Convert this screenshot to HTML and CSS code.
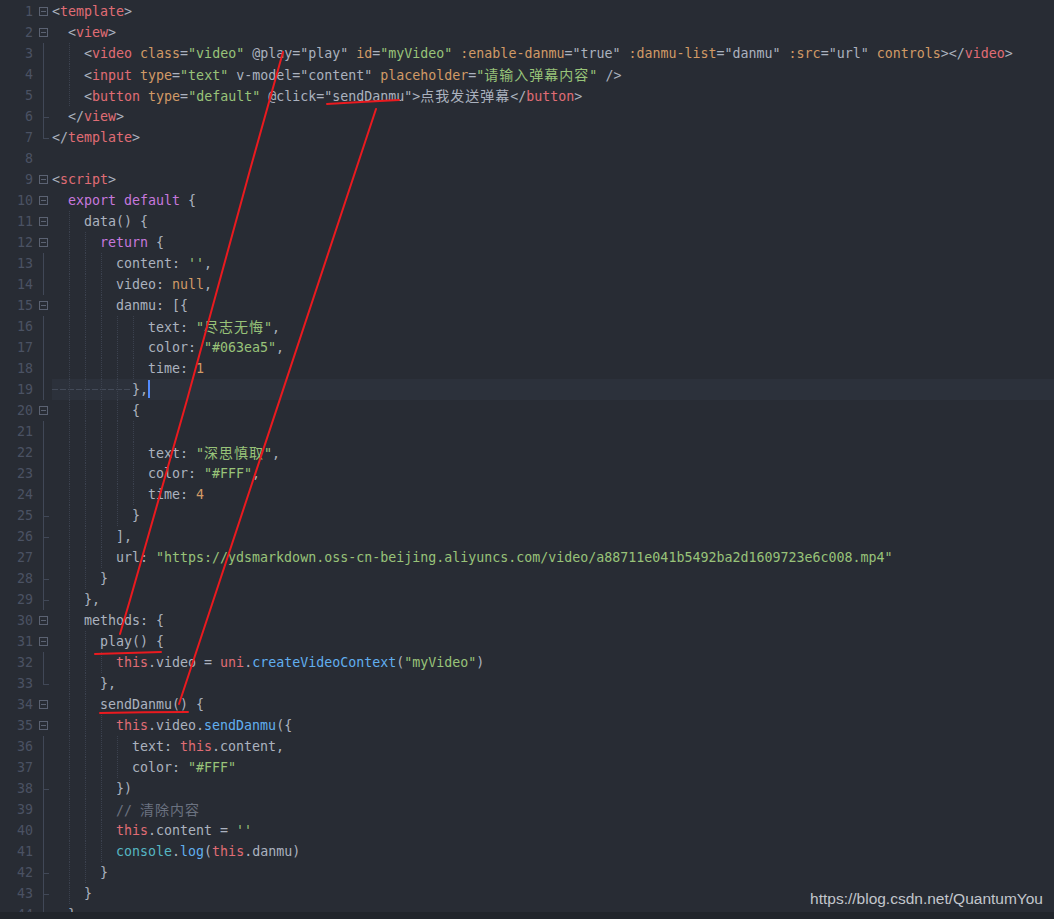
FILE: index.html
```html
<!DOCTYPE html>
<html lang="zh">
<head>
  <meta charset="UTF-8">
  <meta name="viewport" content="width=device-width, initial-scale=1.0">
  <title>App.vue</title>
  <link rel="stylesheet" href="styles.css">
</head>
<body>
  <div class="editor">
    <div class="row"><span class="num">1</span><span class="fold box"><i></i></span><span class="src">&lt;<span class="t">template</span>&gt;</span></div>
    <div class="row"><span class="num">2</span><span class="fold box"><i></i></span><span class="src"><span class="i"></span>&lt;<span class="t">view</span>&gt;</span></div>
    <div class="row"><span class="num">3</span><span class="fold bar"></span><span class="src"><span class="i"></span><span class="g"></span>&lt;<span class="t">video</span> <span class="a">class</span>=<span class="s">"video"</span> @play="play" <span class="a">id</span>=<span class="s">"myVideo"</span> <span class="a">:enable-danmu</span>="true" <span class="a">:danmu-list</span>="danmu" <span class="a">:src</span>="url" <span class="a">controls</span>&gt;&lt;/<span class="t">video</span>&gt;</span></div>
    <div class="row"><span class="num">4</span><span class="fold bar"></span><span class="src"><span class="i"></span><span class="g"></span>&lt;<span class="t">input</span> <span class="a">type</span>=<span class="s">"text"</span> v-model="content" <span class="a">placeholder</span>=<span class="s">"<span class="cjk">请输入弹幕内容</span>"</span> /&gt;</span></div>
    <div class="row"><span class="num">5</span><span class="fold bar"></span><span class="src"><span class="i"></span><span class="g"></span>&lt;<span class="t">button</span> <span class="a">type</span>=<span class="s">"default"</span> @click="sendDanmu"&gt;<span class="cjk">点我发送弹幕</span>&lt;/<span class="t">button</span>&gt;</span></div>
    <div class="row"><span class="num">6</span><span class="fold tick"></span><span class="src"><span class="i"></span>&lt;/<span class="t">view</span>&gt;</span></div>
    <div class="row"><span class="num">7</span><span class="fold end"></span><span class="src">&lt;/<span class="t">template</span>&gt;</span></div>
    <div class="row"><span class="num">8</span><span class="fold"></span><span class="src"></span></div>
    <div class="row"><span class="num">9</span><span class="fold box"><i></i></span><span class="src">&lt;<span class="t">script</span>&gt;</span></div>
    <div class="row"><span class="num">10</span><span class="fold box"><i></i></span><span class="src"><span class="i"></span><span class="k">export default</span> {</span></div>
    <div class="row"><span class="num">11</span><span class="fold box"><i></i></span><span class="src"><span class="i"></span><span class="g"></span>data() {</span></div>
    <div class="row"><span class="num">12</span><span class="fold box"><i></i></span><span class="src"><span class="i"></span><span class="g"></span><span class="g"></span><span class="k">return</span> {</span></div>
    <div class="row"><span class="num">13</span><span class="fold bar"></span><span class="src"><span class="i"></span><span class="g"></span><span class="g"></span><span class="g"></span>content: <span class="s">''</span>,</span></div>
    <div class="row"><span class="num">14</span><span class="fold bar"></span><span class="src"><span class="i"></span><span class="g"></span><span class="g"></span><span class="g"></span>video: <span class="n">null</span>,</span></div>
    <div class="row"><span class="num">15</span><span class="fold box"><i></i></span><span class="src"><span class="i"></span><span class="g"></span><span class="g"></span><span class="g"></span>danmu: [{</span></div>
    <div class="row"><span class="num">16</span><span class="fold bar"></span><span class="src"><span class="i"></span><span class="g"></span><span class="g"></span><span class="g"></span><span class="g"></span><span class="g"></span>text: <span class="s">"<span class="cjk">尽志无悔</span>"</span>,</span></div>
    <div class="row"><span class="num">17</span><span class="fold bar"></span><span class="src"><span class="i"></span><span class="g"></span><span class="g"></span><span class="g"></span><span class="g"></span><span class="g"></span>color: <span class="s">"#063ea5"</span>,</span></div>
    <div class="row"><span class="num">18</span><span class="fold bar"></span><span class="src"><span class="i"></span><span class="g"></span><span class="g"></span><span class="g"></span><span class="g"></span><span class="g"></span>time: <span class="n">1</span></span></div>
    <div class="row cur"><span class="num">19</span><span class="fold bar"></span><span class="src"><span class="ws"><span class="i"></span><span class="g"></span><span class="g"></span><span class="g"></span><span class="g"></span></span>},<span class="caret"></span></span></div>
    <div class="row"><span class="num">20</span><span class="fold box"><i></i></span><span class="src"><span class="i"></span><span class="g"></span><span class="g"></span><span class="g"></span><span class="g"></span>{</span></div>
    <div class="row"><span class="num">21</span><span class="fold bar"></span><span class="src"><span class="i"></span><span class="g"></span><span class="g"></span><span class="g"></span><span class="g"></span><span class="g"></span></span></div>
    <div class="row"><span class="num">22</span><span class="fold bar"></span><span class="src"><span class="i"></span><span class="g"></span><span class="g"></span><span class="g"></span><span class="g"></span><span class="g"></span>text: <span class="s">"<span class="cjk">深思慎取</span>"</span>,</span></div>
    <div class="row"><span class="num">23</span><span class="fold bar"></span><span class="src"><span class="i"></span><span class="g"></span><span class="g"></span><span class="g"></span><span class="g"></span><span class="g"></span>color: <span class="s">"#FFF"</span>,</span></div>
    <div class="row"><span class="num">24</span><span class="fold bar"></span><span class="src"><span class="i"></span><span class="g"></span><span class="g"></span><span class="g"></span><span class="g"></span><span class="g"></span>time: <span class="n">4</span></span></div>
    <div class="row"><span class="num">25</span><span class="fold tick"></span><span class="src"><span class="i"></span><span class="g"></span><span class="g"></span><span class="g"></span><span class="g"></span>}</span></div>
    <div class="row"><span class="num">26</span><span class="fold tick"></span><span class="src"><span class="i"></span><span class="g"></span><span class="g"></span><span class="g"></span>],</span></div>
    <div class="row"><span class="num">27</span><span class="fold bar"></span><span class="src"><span class="i"></span><span class="g"></span><span class="g"></span><span class="g"></span>url: <span class="s">"https://ydsmarkdown.oss-cn-beijing.aliyuncs.com/video/a88711e041b5492ba2d1609723e6c008.mp4"</span></span></div>
    <div class="row"><span class="num">28</span><span class="fold tick"></span><span class="src"><span class="i"></span><span class="g"></span><span class="g"></span>}</span></div>
    <div class="row"><span class="num">29</span><span class="fold tick"></span><span class="src"><span class="i"></span><span class="g"></span>},</span></div>
    <div class="row"><span class="num">30</span><span class="fold box"><i></i></span><span class="src"><span class="i"></span><span class="g"></span>methods: {</span></div>
    <div class="row"><span class="num">31</span><span class="fold box"><i></i></span><span class="src"><span class="i"></span><span class="g"></span><span class="g"></span>play() {</span></div>
    <div class="row"><span class="num">32</span><span class="fold bar"></span><span class="src"><span class="i"></span><span class="g"></span><span class="g"></span><span class="g"></span><span class="r">this</span>.video = <span class="r">uni</span>.<span class="f">createVideoContext</span>(<span class="s">"myVideo"</span>)</span></div>
    <div class="row"><span class="num">33</span><span class="fold end"></span><span class="src"><span class="i"></span><span class="g"></span><span class="g"></span>},</span></div>
    <div class="row"><span class="num">34</span><span class="fold box"><i></i></span><span class="src"><span class="i"></span><span class="g"></span><span class="g"></span>sendDanmu() {</span></div>
    <div class="row"><span class="num">35</span><span class="fold box"><i></i></span><span class="src"><span class="i"></span><span class="g"></span><span class="g"></span><span class="g"></span><span class="r">this</span>.video.<span class="f">sendDanmu</span>({</span></div>
    <div class="row"><span class="num">36</span><span class="fold bar"></span><span class="src"><span class="i"></span><span class="g"></span><span class="g"></span><span class="g"></span><span class="g"></span>text: <span class="r">this</span>.content,</span></div>
    <div class="row"><span class="num">37</span><span class="fold bar"></span><span class="src"><span class="i"></span><span class="g"></span><span class="g"></span><span class="g"></span><span class="g"></span>color: <span class="s">"#FFF"</span></span></div>
    <div class="row"><span class="num">38</span><span class="fold tick"></span><span class="src"><span class="i"></span><span class="g"></span><span class="g"></span><span class="g"></span>})</span></div>
    <div class="row"><span class="num">39</span><span class="fold bar"></span><span class="src"><span class="i"></span><span class="g"></span><span class="g"></span><span class="g"></span><span class="c">// <span class="cjk">清除内容</span></span></span></div>
    <div class="row"><span class="num">40</span><span class="fold bar"></span><span class="src"><span class="i"></span><span class="g"></span><span class="g"></span><span class="g"></span><span class="r">this</span>.content = <span class="s">''</span></span></div>
    <div class="row"><span class="num">41</span><span class="fold bar"></span><span class="src"><span class="i"></span><span class="g"></span><span class="g"></span><span class="g"></span><span class="y">console</span>.<span class="f">log</span>(<span class="r">this</span>.danmu)</span></div>
    <div class="row"><span class="num">42</span><span class="fold tick"></span><span class="src"><span class="i"></span><span class="g"></span><span class="g"></span>}</span></div>
    <div class="row"><span class="num">43</span><span class="fold tick"></span><span class="src"><span class="i"></span><span class="g"></span>}</span></div>
    <div class="row"><span class="num">44</span><span class="fold tick"></span><span class="src"><span class="i"></span>}</span></div>
  </div>
  <div class="hscroll"></div>

  <!-- hand-drawn red annotation over the code -->
  <svg class="marks" width="1054" height="919" viewBox="0 0 1054 919">
    <g fill="none" stroke="#ea1a1f" stroke-width="2" stroke-linecap="round" stroke-linejoin="round">
      <polyline points="283,52 250,170 187,400 130,600 120,634" />
      <path d="M95,654 Q130,653 161,652" />
      <path d="M327,104 Q360,102 399,100" />
      <line x1="376" y1="109" x2="179" y2="704" />
      <path d="M100,713 Q145,712 188,712" />
    </g>
  </svg>
  <div class="watermark">https://blog.csdn.net/QuantumYou</div>
</body>
</html>
```

FILE: styles.css
```css
/* Editor frame */
body {
  margin: 0;
  height: 919px;
  overflow: hidden;
  background: #282c34;
  display: flex;
  flex-direction: column;
  position: relative;
}

.editor {
  flex: 1;
  overflow: hidden;
  padding-top: 1px;
  font-family: "DejaVu Sans Mono", monospace;
  font-size: 13.3px;
  color: #abb2bf;
}

.row {
  display: flex;
  height: 21px;
  line-height: 21px;
}

.num {
  flex: none;
  width: 33px;
  text-align: right;
  color: #4b5263;
}

/* Fold gutter */
.fold {
  flex: none;
  width: 19px;
  height: 21px;
}

.fold.box {
  display: flex;
  align-items: center;
  padding-left: 6px;
  box-sizing: border-box;
}

.fold.box i {
  display: block;
  width: 9px;
  height: 9px;
  box-sizing: border-box;
  border: 1px solid #5b6272;
  background: linear-gradient(#5b6272, #5b6272) no-repeat center / 5px 1px;
}

.fold.bar {
  background: linear-gradient(#414857, #414857) no-repeat 10px 0 / 1px 100%;
}

.fold.tick {
  background:
    linear-gradient(#414857, #414857) no-repeat 10px 0 / 1px 100%,
    linear-gradient(#414857, #414857) no-repeat 10px 11px / 6px 1px;
}

.fold.end {
  background:
    linear-gradient(#414857, #414857) no-repeat 10px 0 / 1px 11px,
    linear-gradient(#414857, #414857) no-repeat 10px 11px / 6px 1px;
}

/* Code */
.src {
  flex: 1;
  white-space: pre;
}

.i,
.g {
  display: inline-block;
  width: 16px;
  height: 21px;
  vertical-align: top;
}

.g {
  background: linear-gradient(#3b414e 50%, transparent 50%) repeat-y 1px 0 / 1px 2px;
}

.cur .src {
  background: #2c313b;
}

.ws {
  display: inline-block;
  height: 21px;
  vertical-align: top;
  background: repeating-linear-gradient(to right, #434a58 0 6px, transparent 6px 8px) no-repeat 0 10px / 78px 1px;
}

.caret {
  display: inline-block;
  width: 2px;
  height: 18px;
  vertical-align: -4px;
  background: #528bff;
}

.cjk {
  font-family: "Noto Sans CJK SC", sans-serif;
  font-size: 14px;
  letter-spacing: 1px;
}

.t { color: #e06c75; }
.a { color: #d19a66; }
.s { color: #98c379; }
.k { color: #c678dd; }
.n { color: #d19a66; }
.r { color: #e06c75; }
.f { color: #61afef; }
.y { color: #56b6c2; }
.c { color: #6b7280; }

.hscroll {
  flex: none;
  height: 7px;
  background: #21252b;
}

/* Overlays */
.marks {
  position: absolute;
  top: 0;
  left: 0;
  pointer-events: none;
}

.watermark {
  position: absolute;
  right: 11px;
  top: 890px;
  font-family: "Liberation Sans", Arial, sans-serif;
  font-size: 15.5px;
  color: #c3c6cc;
}
```
